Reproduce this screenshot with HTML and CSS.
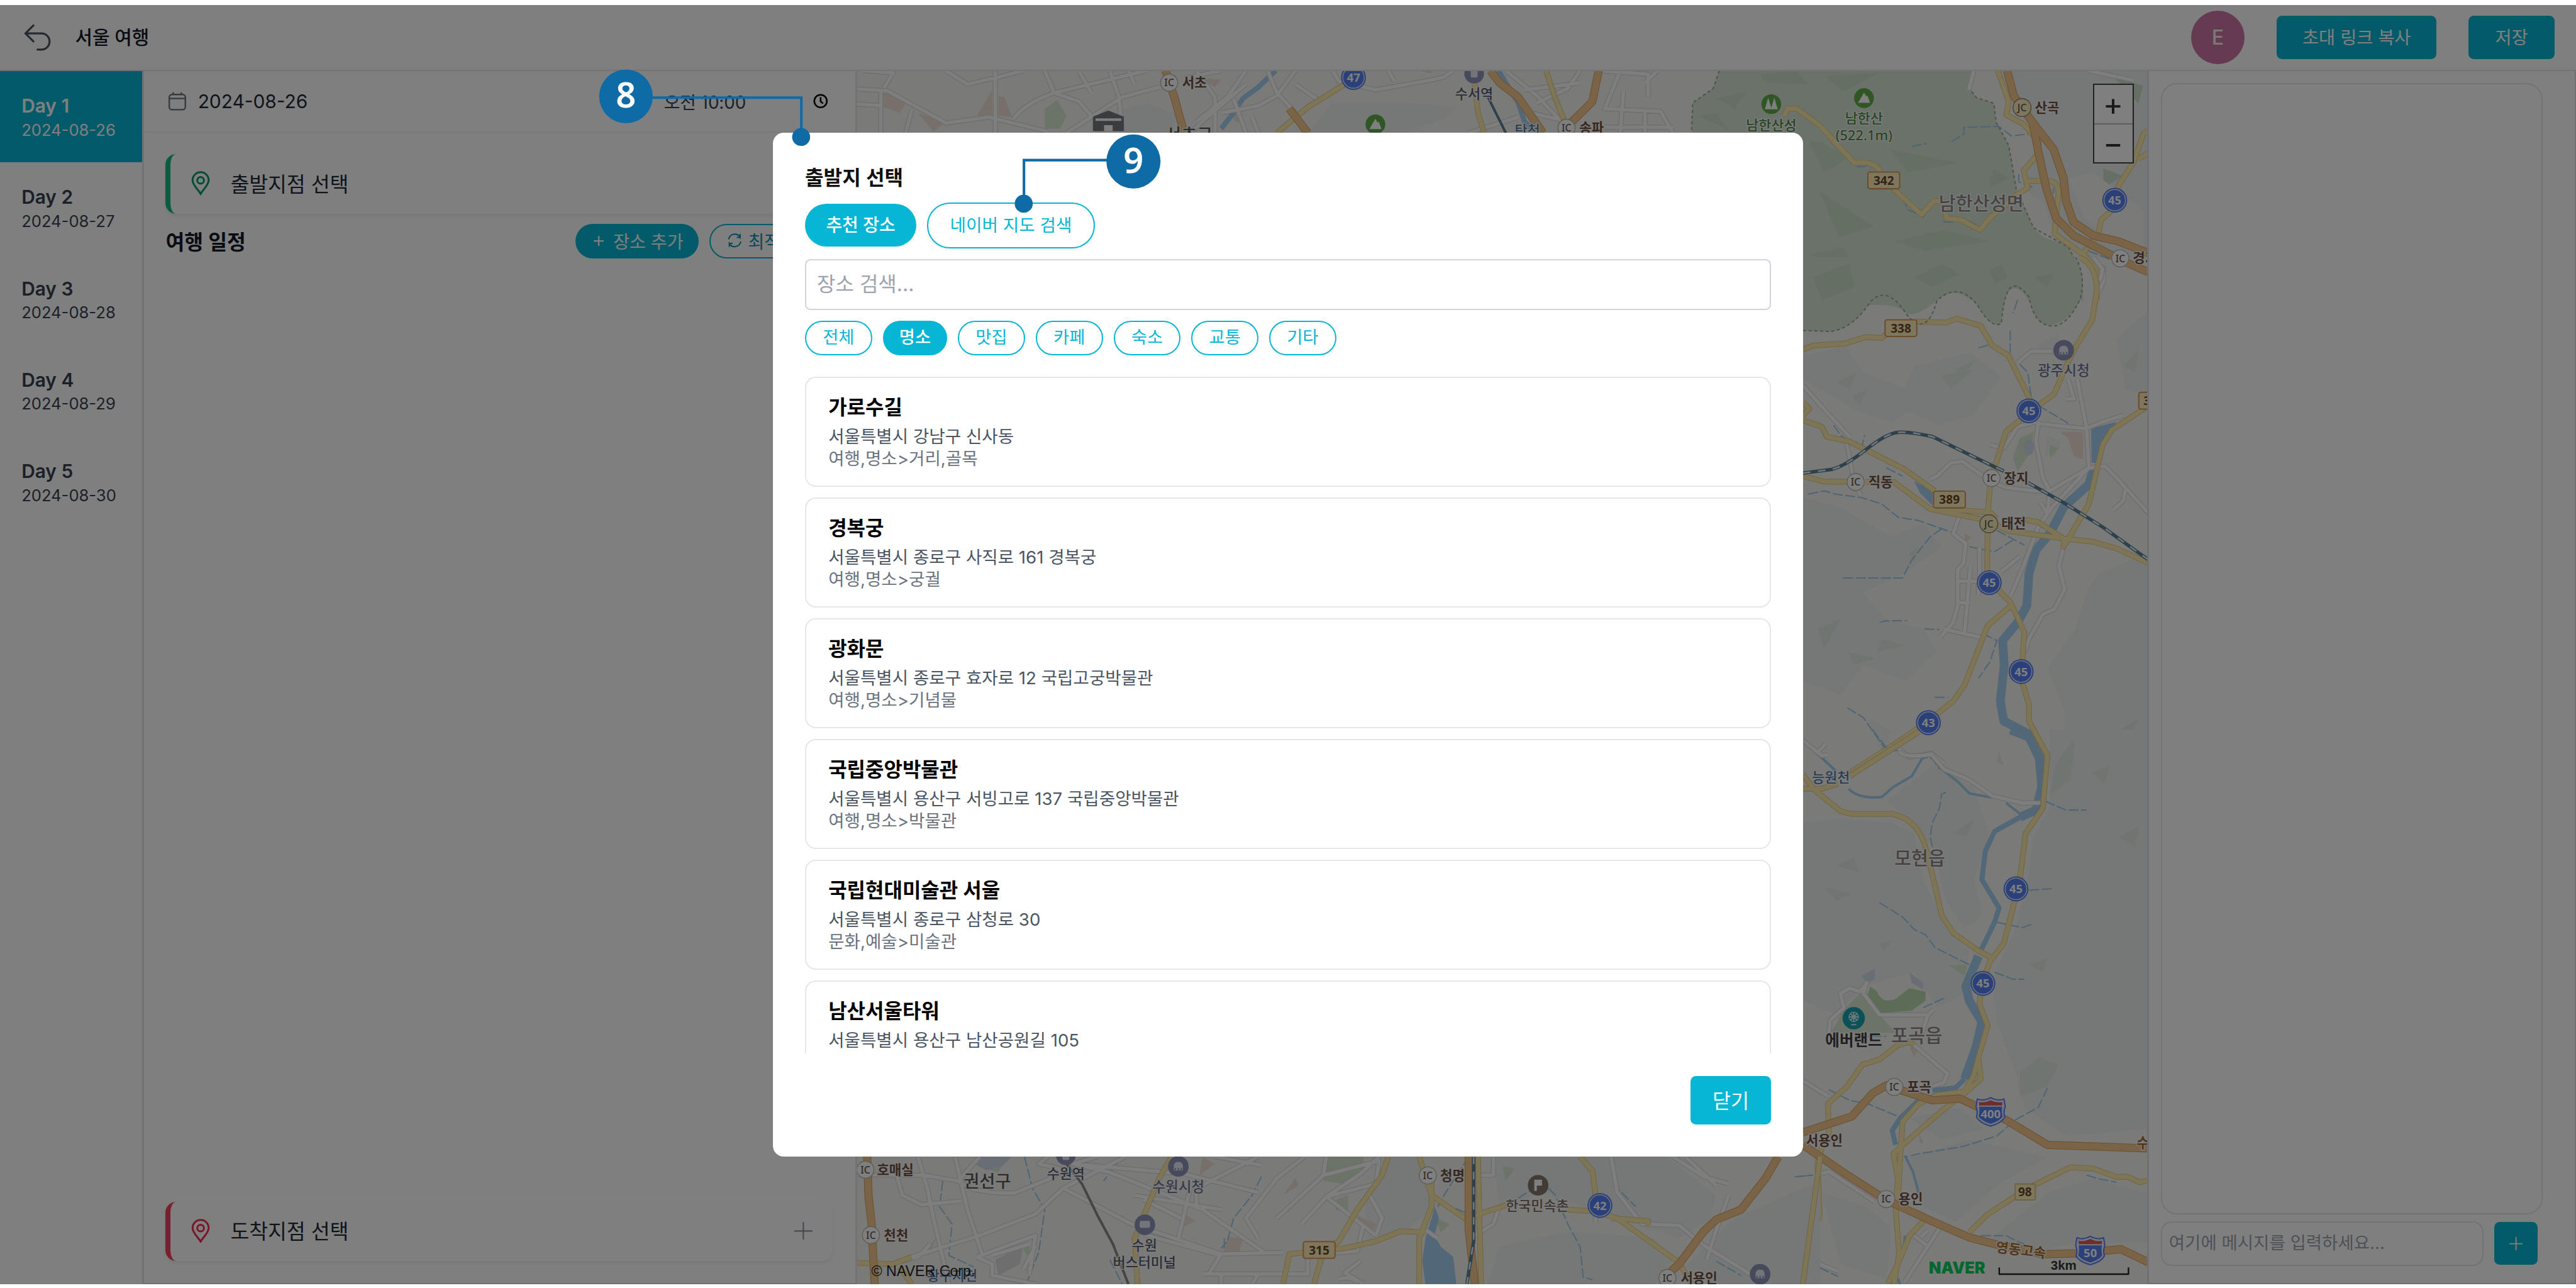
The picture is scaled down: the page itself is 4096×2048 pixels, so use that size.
FILE: index.html
```html
<!DOCTYPE html>
<html lang="ko">
<head>
<meta charset="utf-8">
<title>서울 여행</title>
<link rel="stylesheet" href="styles.css">
</head>
<body>
<div class="app">
  <header class="topbar">
    <svg class="back" viewBox="0 0 24 24"><path d="M9 15 3 9m0 0 6-6M3 9h12a6 6 0 0 1 0 12h-3"/></svg>
    <h1 class="trip-title">서울 여행</h1>
    <div class="avatar">E</div>
    <button class="btn">초대 링크 복사</button>
    <button class="btn btn-save">저장</button>
  </header>
  <main class="columns">
    <nav class="days">
      <div class="day day-active"><b>Day 1</b><span>2024-08-26</span></div>
      <div class="day"><b>Day 2</b><span>2024-08-27</span></div>
      <div class="day"><b>Day 3</b><span>2024-08-28</span></div>
      <div class="day"><b>Day 4</b><span>2024-08-29</span></div>
      <div class="day"><b>Day 5</b><span>2024-08-30</span></div>
    </nav>
    <section class="planner">
      <div class="date-row">
        <svg class="calendar" viewBox="0 0 14 14"><rect x="1" y="2" width="12" height="11.300" rx="2"/><path d="M1 5h12M4 .3v1.700M10 .3v1.700"/></svg>
        <span class="date">2024-08-26</span>
        <span class="time">오전 10:00</span>
        <svg class="clock" viewBox="0 0 12 12"><circle cx="6" cy="6" r="4.7"/><path d="M6 3v3.2l1.8 1.6"/></svg>
      </div>
      <div class="place place-start">
        <svg class="pin" viewBox="0 0 14 18"><path d="M7 17C5 13.500 1 10.500 1 6.800a6 6 0 0 1 12 0C13 10.500 9 13.500 7 17z"/><circle cx="7" cy="6.900" r="2.500"/></svg>
        <span>출발지점 선택</span>
      </div>
      <div class="schedule">
        <h2>여행 일정</h2>
        <button class="pill-add"><svg viewBox="0 0 8 8"><path d="M4 .5v7M.5 4h7"/></svg>장소 추가</button>
        <button class="pill-opt"><svg viewBox="0 0 12 12"><path d="M1.300 5.200A4.800 4.800 0 0 1 10.200 3.600V1M10.200 3.700H7.600M10.700 6.800A4.800 4.800 0 0 1 1.800 8.400V11M1.800 8.300h2.600"/></svg>최적화</button>
      </div>
      <div class="place place-end">
        <svg class="pin" viewBox="0 0 14 18"><path d="M7 17C5 13.500 1 10.500 1 6.800a6 6 0 0 1 12 0C13 10.500 9 13.500 7 17z"/><circle cx="7" cy="6.900" r="2.500"/></svg>
        <span>도착지점 선택</span>
        <svg class="plus" viewBox="0 0 14 14"><path d="M7 0v14M0 7h14"/></svg>
      </div>
    </section>

    <section class="map">
      <svg class="map-canvas" viewBox="1997 166 3004 2824" preserveAspectRatio="none">
        <defs>
          <g id="ic"><circle r="20" class="ic-ring"/><text class="ic-text" y="8.500">IC</text></g>
          <g id="jc"><circle r="21" class="jc-ring"/><text class="ic-text" y="8.500">JC</text></g>
          <g id="nat"><circle r="29" class="nat-out"/><circle r="25" class="nat-in"/></g>
          <g id="shield"><path class="shield-out" d="M-31-30Q-18-24 0-33Q18-24 31-30L34-12Q29 0 33 12Q26 26 0 33Q-26 26-33 12Q-29 0-34-12z"/><path class="shield-in" d="M-27-12H27Q25 0 28 11Q20 22 0 28Q-20 22-28 11Q-25 0-27-12z"/><path class="shield-red" d="M-27-15V-23Q-14-20 0-27Q14-20 27-23V-15z"/></g>
          <g id="hall"><circle r="24" class="poi-blue"/><path class="poi-mark" d="M-12 11V-3Q-10-12 0-12Q10-12 12-3V11zM-7 4v5M0 4v5M7 4v5"/></g>
          <g id="peak"><circle r="23" class="poi-green"/><path class="poi-white" d="M-14 11 0-13 5-4 8-6 14 11z"/></g>

          <path id="a-white" d="M580 1330 620 1400V1470L610 1530 M360 370 350 470 M0 360 60 300 M590 370 680 420"/>
          <path id="a-yellow" d="M0 565Q35 600 80 740L120 850H145Q165 860 170 890L200 990 255 1120 280 1050H298L305 1140 335 1148 372 1200 395 1130 412 1095 445 1020 468 980 460 890 490 800V740L460 650 425 600 430 530 408 370 M468 945H510Q530 950 530 1010L522 1220 580 1330 605 1400 607 1568 M580 1320 610 1220 615 1150 640 1090 650 970 680 850 700 700 710 680 M690 830 710 800"/>
          <path id="a-orange" d="M427 370 440 500 478 640 520 780 540 930 545 1050 560 1160 600 1230 650 1260 710 1320 M478 640 490 800 505 980 525 1140 560 1230 620 1310 665 1370 710 1420"/>
          <path id="b-white" d="M37 390 140 470 240 545 M225 560 240 610 260 690 290 725 M590 675 620 665 680 625 730 620 790 650 850 680 920 700 1040 710 1110 710 1280 640 M1060 500 1050 560 1080 670 1110 710 1100 780 M1280 640 1270 520 1230 370M1190 370 1215 430H1180M970 320 1030 285H1120M1060 505 1180 515 1270 520 1340 500 1430 480M1280 640 1350 635 1400 670 1568 800M1440 700 1430 740 1385 768M1280 640 1120 760 1060 820 1000 930 940 1030M980 910 900 955M1170 880 1150 940 1175 1010 1130 1070 1080 1085 1020 1160 1000 1200M720 780 690 840 745 870 735 930 710 950V1060L690 1110 635 1155M805 880V980M715 985H800V1030M715 1050H760M765 940 750 1060 740 1140M650 1130 740 1145 810 1155M455 1495 500 1520 595 1508 650 1540 M1300 0 1340 35 1330 70M850 570 910 580 970 515 1050 500M1070 745 1100 780"/>
          <path id="b-yellow" d="M37 280 80 268 220 262 310 242 380 245 400 232M530 195 660 198 705 186 810 208 860 268 930 298 1030 440 1060 455M1240 0Q1310 20 1315 100L1295 190 1220 275 1175 340 1130 415 1040 460 920 530 870 640 850 700 840 780 838 950 850 985 940 1050 1000 1140 985 1280 1020 1360V1410L1100 1520 1090 1568M940 1060 840 1120 740 1300 690 1350 600 1400 480 1460 240 1568M37 495 120 515 140 545 240 560 480 645 610 710 M37 665 130 682H230M310 682H430L590 765 840 800 930 832 1170 855 1300 865 1400 885 1540 930M640 765 850 775 880 795 M1000 798 1060 805 1170 855V880L1280 750 1340 570 1380 525 1540 450M37 440 65 460 37 480"/>
          <path id="b-rail" d="M37 656 160 645Q220 635 310 585T450 532 600 545L820 620 910 650 M1015 685 1180 750 1340 820 1540 920"/>
          <path id="c-white" d="M455 60Q480 80 595 68L650 110 760 140 860 185 990 205H1070M37 30 120 72 145 70M105 60 135 40M150 850 155 815 215 780 200 740 240 725 285 735 315 710 300 740 370 800 580 800 605 785M580 800 555 850M520 885 665 965 650 990 600 1000M37 985 150 1030M120 1245 150 1240 350 1325M37 1420 55 1460 110 1500 190 1520M630 1400 480 1550M520 1420 580 1450M550 1425 580 1405"/>
          <path id="c-yellow" d="M1040 0 1100 70 1080 220 1005 290 980 420 950 500 910 600 850 650 810 720 805 770 840 830 800 920 810 980 740 1020 640 1070 480 1160 430 1190 450 1260 440 1340 455 1470 430 1568M800 920 780 970 740 1015 620 1025 540 1050 470 1100 460 1200 450 1320M37 125 90 170 200 228 250 236H430Q540 255 570 330T640 520L690 570 800 620 860 640M240 130 540 5M37 165 120 165 190 150M520 885 500 875 450 885 370 925 295 940 230 1000 145 1050 150 1130 115 1180 100 1220 110 1360 70 1440 60 1490 10 1555M560 1380 500 1420 450 1500 405 1555M760 1410 840 1360 1020 1285 1200 1228 1300 1232 1400 1255 1450 1255 1500 1270 1540 1265"/>
          <path id="c-orange" d="M37 1130 250 1085 340 1020 400 998 480 1015 600 1040 720 1035 820 1065 920 1095 1100 1165 1540 1175M37 1165 230 1250 400 1320 600 1380 760 1425 880 1445 1080 1472 1220 1470 1420 1458 1540 1495"/>
          <path id="d-white" d="M110 130 125 350 135 560 160 1020M170 130 190 500 215 830 M210 130 175 300M0 255 120 260 175 300 200 360 230 380 265 385 320 290 345 220 305 180 320 130M400 130 360 180 385 190 540 250 660 380M180 440 115 465 85 400 75 250M445 130 345 350M345 350 300 530 210 680 100 830M345 350 455 600 600 810 700 800M360 180 420 240 570 500 670 800M460 400 600 500M475 430 535 560M590 130 665 190M660 130 560 350 560 480M735 130 690 280 640 560 660 700M770 130 765 260 690 560M855 130 825 250 770 410 730 600 M765 260 855 160 850 320 770 410 850 680M830 600 820 790 730 820M840 400 860 560 850 680M205 830 300 680 290 950M205 830 230 880 230 960 300 1020M290 740 230 820M570 950H740V810M600 960V1020M660 950 650 1020M825 860 800 940 830 1020M790 985Q810 960 820 1010M130 740 110 830 60 890M300 750 280 920M1010 260H1040V130M1330 130 1380 270 1420 320M1350 130 1400 330M1230 130 1240 380 1280 600 1340 610 1380 750 1470 990M1420 400 1400 640 1385 850M1050 470 1040 600 1010 680M930 640 950 700M480 680 600 820M600 810 580 950M1205 500V590M550 350 530 720"/>
          <path id="d-yellow" d="M520 130 500 280 475 540 460 700 465 1020M870 130 860 260 820 500 790 720 765 800 755 940 750 1020M920 130 940 400 1000 580M940 300 940 480 920 700 920 1020M700 1020 710 810 800 770 850 720 890 650 930 660M1015 130 1020 1020M1010 540 1060 470M1160 500 1200 510 1240 560 1340 870M1180 130 1200 230 1205 400M1230 560 1290 580V610M1568 130 1550 700 1540 1020M0 870 70 880 100 830M80 900 100 1020M1340 870 1360 1020"/>
          <path id="d-orange" d="M28 130 30 400 35 600 40 1020M1500 130 1480 280 1440 500 1400 570 1380 650 1340 880 1325 940M1000 130V640L1010 1020"/>
          <path id="e-white" d="M22 105 70 120 55 225 M0 230 60 245 155 470 225 430 320 530M50 250V540M100 380 90 540M155 105 190 200 240 150 280 105M235 105V540M315 105 330 260 370 320 390 420M330 260 480 105M330 260Q280 340 265 440M370 105 390 260M420 105 435 290 440 540M450 105 460 200M350 540 440 290 500 220M600 105 540 160M560 105 590 290 590 540M640 105 610 290 560 460 M675 105 690 260 720 400M720 105 690 280 660 350 600 400M720 200 760 320M640 200 580 420 550 540M620 300 640 540M870 105 880 180M780 105 790 180 850 240 940 170 960 150 975 105M1060 105 1110 280 1150 460M1180 105 1160 230 1110 330M1090 240 1180 190M1090 390 1160 460M1210 105 1290 130 1290 290M1245 105 1220 370 1310 390 1330 540M1250 250 1245 540M1305 105 1285 190M1285 380V540M1000 540 1080 430M1220 500H1330M660 540 650 430M0 335 50 350"/>
          <path id="e-yellow" d="M800 200 740 360 690 540M1010 200 1015 400 1025 540M1125 105 1140 300 1155 460M1568 490 1530 370H1515L1510 420"/>
          <path id="e-orange" d="M510 105 525 300 540 540M710 370 740 540M1035 105 1050 190 1080 290 1120 540M1210 105 1200 320 1165 470"/>
        </defs>
        <rect class="land" x="1997" y="166" width="3004" height="2824"/>

        <g class="tile" transform="translate(4180 0) scale(1.160700 .446400)">
          <path class="hill" d="M0 370H710V1344H0z"/>
          <path class="forest" d="M0 370H362L350 460 365 510 400 540 405 640 430 760 445 990 480 1190 550 1290 575 1420 580 1568H0z"/>
          <path class="forest-dark" d="M60 400 170 380 100 480zM20 700 110 820 60 900zM190 780 330 850 230 900zM200 1260 300 1200 390 1260 260 1310zM50 1000 160 1180 90 1240zM300 1400 420 1350 500 1440 370 1500zM30 1330 100 1290 120 1420zM620 880 660 920 620 980zM640 400 700 450 690 540zM400 880 430 930 390 980z"/>
          <path class="land" d="M362 370H410L440 520 470 650 480 780 460 980 500 1060 520 1220 560 1290 500 1240 480 1190 450 1000 430 760 405 640 400 540 365 510 350 460zM550 930 580 1130 620 1230 700 1290V1100L600 900zM285 1568Q320 1490 355 1568zM420 1568Q440 1440 470 1568z"/>
          <path class="trail" d="M362 370 350 460 365 510 400 540 405 640 430 760 445 990 480 1190 550 1290 575 1420"/>
          <path class="stream" d="M235 765 265 750M315 740 340 700V665L410 660 435 710 470 700M125 870H140L160 850M220 1030 225 1090 260 1135M298 1160H320L340 1140 372 1185M450 910V950L480 980M520 980V1010M590 1310 670 1390M75 740 90 780"/>
          <use href="#a-white" class="white-case"/><use href="#a-white" class="white-road"/>
          <use href="#a-yellow" class="yellow-case"/><use href="#a-yellow" class="yellow-road"/>
          <use href="#a-orange" class="orange-case"/><use href="#a-orange" class="orange-road"/>
        </g>

        <g class="tile" transform="translate(4180 600) scale(.535700 .765300)">
          <path class="forest" d="M37 0H1225Q1270 70 1240 130T1110 208Q1040 200 1020 120T940 92Q910 110 900 200 860 220 800 150 720 70 620 130T480 165 320 145Q250 215 160 225L37 222z"/>
          <path class="forest-dark" d="M80 60 240 20 260 90 120 130zM520 60 640 20 720 50 600 90zM850 40 900 20 930 60 870 80zM1040 60 1130 50 1100 90z"/>
          <path class="hill" d="M37 300 220 270 300 350 480 400 520 330 760 290 900 360 840 420 780 480 620 510 500 470 420 500 280 470 160 420 37 370zM37 730 200 760 420 850 560 810 640 880 480 960 300 1020 400 1100 560 1130 620 1200 480 1290 300 1240 200 1330 37 1290zM1100 540 1160 560 1130 610 1090 600zM1330 960 1540 900V1568H1150L1180 1390 1100 1250 1220 1130 1280 1000zM1050 270 1150 230 1130 300zM1400 250 1540 160V420L1440 400zM320 1400 420 1440 380 1510z"/>
          <path class="hill-dark" d="M180 380 270 350 240 400zM640 360 780 340 680 400zM250 420 320 400 280 450zM700 340 790 310 720 370zM100 1130 200 1100 130 1190zM230 1200 350 1220 260 1240zM380 1160 480 1180 360 1200zM500 900 540 880 520 930zM1410 1440 1500 1400 1460 1460zM1430 330 1500 280 1480 350z"/>
          <path class="park" d="M950 610 980 550 1040 530 1030 590 970 650zM1110 570 1150 580 1110 610z"/>
          <path class="urban" d="M1155 530 1255 530V615L1215 605 1190 550zM740 840 770 850 740 870z"/>
          <circle class="pond" cx="1018" cy="577" r="24"/>
          <path class="water" d="M1290 520 1400 500 1350 560 1315 625H1292zM520 680 600 710V755L545 715z"/>
          <path class="river" d="M1300 645 1280 690 1170 760 1110 840 1050 890 1020 960 1010 1060 970 1110 905 1165 912 1240 895 1350 910 1410 1020 1450 1065 1510 1075 1568"/>
          <path class="stream" d="M970 130 950 170M938 222V290M800 275 850 265M980 325 1015 350 1030 430M1060 450 1180 500 1200 510M1440 500 1540 460M60 720 130 710 180 720 290 730 380 750 450 790 540 800 680 835M640 825 590 850 510 920 470 975H210M760 880 870 895 950 860M880 830 1000 875M370 1110 400 1105 490 1105M565 1130 630 1132M820 1145 880 1165 850 1230 800 1280M610 1338H670M230 1370 300 1400 400 1500H450M37 1475 110 1510 180 1568M520 1568 560 1520 600 1525 640 1568M170 510 200 540 290 585 305 540M400 640 470 665"/>
          <use href="#b-white" class="white-case"/><use href="#b-white" class="white-road"/>
          <use href="#b-yellow" class="yellow-case"/><use href="#b-yellow" class="yellow-road"/>
          <use href="#b-rail" class="rail"/><use href="#b-rail" class="rail-dash"/>
          <path class="trail" d="M37 222 160 225Q250 215 320 145T480 165 620 130Q720 70 800 150 860 220 900 200 910 110 940 92T1020 120Q1040 200 1110 208T1240 130Q1270 70 1225 0"/>
        </g>

        <g class="tile" transform="translate(4180 1700) scale(.535700 .829100)">
          <path class="hill" d="M600 100 780 160 850 300 780 420 820 520 740 560 660 480 600 330 480 240 400 200zM37 260 200 250 420 260 520 290 560 420 660 560 760 620 740 740 620 780 520 680 300 720 180 800 37 760zM1110 0H1540V1120L1180 1140 1000 1060 960 960 880 820 860 700 960 560 1020 400 1040 300 1110 220zM500 1090 720 1060 820 1120 640 1150zM500 1200 760 1150 1100 1200 900 1270 700 1380 560 1340zM120 1300 320 1340 420 1400 400 1540 200 1500zM830 1440 1100 1300 1300 1260 1540 1300V1440L1220 1440 1080 1460z"/>
          <path class="hill-dark" d="M1140 90 1220 20 1200 140 1110 180zM1290 120 1370 100 1350 150zM690 290 780 250 750 300zM180 380 260 360 280 400zM130 440 250 460 180 480zM1020 660 1100 640 1080 680zM980 960 1060 920 1150 940 1100 1000 980 1030zM370 600 430 590 390 620zM1410 300 1500 270 1480 330zM890 60 910 100 880 90z"/>
          <path class="park" d="M210 790 300 730 370 800 440 850 160 850zM670 660 750 660 740 690z"/>
          <path class="golf" d="M330 720 360 735Q380 770 440 755L500 725 570 735V760L510 788 370 795 315 750z"/>
          <path class="pond" d="M290 690 350 670V700L320 710zM500 680 560 710V730L510 710z"/>
          <path class="urban" d="M500 890 540 895 520 920zM540 1130 560 1160 545 1160z"/>
          <path class="river" d="M940 0 1020 20 1065 80 1075 160 1050 225 980 245"/>
          <path class="river-thin" d="M1050 225 980 245 870 285 830 340 815 420 890 500 870 540 810 620"/>
          <path class="river" d="M800 635 745 720 760 760 815 820 790 890 740 980"/>
          <path class="river-thin" d="M740 980 700 1005 600 1012M540 1040 460 1090 425 1125 440 1165"/>
          <path class="stream-wide" d="M235 165Q280 195 380 188L430 160 510 130 555 80 590 72 640 110 710 145 760 178 860 190M920 205 980 235M480 1195 515 1240 540 1300M37 30 180 115M480 1420 475 1470M450 1540 465 1568"/>
          <path class="stream" d="M340 0 400 50H450M660 175 640 180 630 220 600 260 590 300 600 330M1090 200 1180 225H1270M1020 450 1130 445M880 540 990 555 1035 545M370 485 470 525 520 560 570 575 610 610 700 640 780 665M870 680 950 700H1000M560 780 660 750M150 1010 240 1040 320 1050 450 1085M1100 1005 1060 1060 960 1095 880 1140 730 1170 540 1190 480 1200M810 1420 920 1420 1050 1460M110 1510 190 1535M1270 1250 1320 1260 1400 1270M0 1255 80 1250M280 860H400"/>
          <use href="#c-white" class="white-case"/><use href="#c-white" class="white-road"/>
          <use href="#c-yellow" class="yellow-case"/><use href="#c-yellow" class="yellow-road"/>
          <use href="#c-orange" class="orange-case"/><use href="#c-orange" class="orange-road"/>
        </g>

        <g class="tile" transform="translate(1980 2650) scale(1.441300 .333333)">
          <path class="hill" d="M1040 130H1320L1400 400 1390 560 1340 700 1240 560 1120 380 1050 480zM1430 560 1568 300V1020H1390L1350 900zM1160 650 1300 700 1330 850 1300 1020H1030L1050 760zM870 130H920L940 500 900 640 840 760 830 400z"/>
          <path class="park" d="M765 130H830V260L800 320 765 300zM785 430 805 400V520L785 500zM1055 200 1075 210 1060 300zM945 560 970 600 955 660zM225 220 245 200 240 240zM290 740V840L280 780z"/>
          <path class="urban" d="M570 130 590 180 565 260zM720 280 725 330 700 400zM540 530 558 580 540 620zM610 690 635 700 630 790 605 800zM820 540 850 600 845 670 820 600zM130 740 140 700 125 840z"/>
          <path class="campus" d="M235 850 280 750 275 880 240 960z"/>
          <path class="pond" d="M205 130H262L245 200 220 225 205 190z"/>
          <path class="water" d="M945 480 952 560 945 680 955 760 975 830 980 1020H930L925 860 930 700 940 560z"/>
          <path class="stream" d="M282 130 295 350 315 500 305 800 285 1020M440 130 410 300M150 300 145 480 165 600 160 820 200 900M665 270 650 400 620 560 610 720 600 770M420 850 440 1020M605 700V790M1000 130 960 400 950 480M1080 420 1120 310 1140 400 1160 600 1180 760 1185 970 1200 990M1235 220 1240 350 1270 480M1530 270 1555 260M1400 860 1440 960M960 460 1000 530"/>
          <use href="#d-white" class="white-case"/><use href="#d-white" class="white-road"/>
          <use href="#d-yellow" class="yellow-case"/><use href="#d-yellow" class="yellow-road"/>
          <use href="#d-orange" class="orange-case"/><use href="#d-orange" class="orange-road"/>
          <path class="train" d="M350 180 375 320 400 540 425 740 450 1020"/>
          <path class="rail" d="M1008 130 1008 720 997 1020"/><path class="rail-dash" d="M1008 130 1008 720 997 1020"/>
        </g>

        <g class="tile" transform="translate(1980 130) scale(1.441300 .333333)">
          <path class="hill" d="M440 380 480 330 530 420 520 540H440zM780 330 900 330 980 360 960 440 900 540H740z"/>
          <path class="forest" d="M1405 105H1568V600H1360L1362 330 1395 230z"/>
          <path class="forest-dark" d="M1470 130 1530 110 1550 200 1480 190zM1400 300 1450 250 1430 370zM1370 420 1400 400 1420 520z"/>
          <path class="urban" d="M230 240V420H205zM240 280 250 290 262 430 240 420zM50 255 70 280 90 340 80 400 55 360zM110 400 135 440 150 480 135 530zM560 150 600 170 590 220zM620 380 640 490 620 450zM320 190 330 250"/>
          <path class="park" d="M315 370 335 310 350 420 340 510H315zM920 105H940V125z"/>
          <path class="river-thin" d="M688 105 660 220 635 300 620 400 600 510M1048 105 1080 330 1090 460 1110 540"/>
          <use href="#e-white" class="white-case"/><use href="#e-white" class="white-road"/>
          <use href="#e-yellow" class="yellow-case"/><use href="#e-yellow" class="yellow-road"/>
          <use href="#e-orange" class="orange-case"/><use href="#e-orange" class="orange-road"/>
          <path class="train-blue" d="M1030 280 1060 540"/>
          <path class="trail" d="M1405 105 1395 230 1362 330 1360 540"/>
        </g>

        <g class="junctions">
          <use href="#ic" x="2723.700" y="193"/><text x="2754" y="204">서초</text>
          <use href="#ic" x="3649" y="298"/><text x="3679" y="309">송파</text>
          <use href="#jc" x="4710" y="251"/><text x="4740" y="262">산곡</text>
          <use href="#ic" x="4939" y="602"/><text x="4968" y="613">경기광주</text>
          <use href="#ic" x="4322.500" y="1122.700"/><text x="4352" y="1134">직동</text>
          <use href="#ic" x="4639" y="1113.500"/><text x="4668" y="1125">장지</text>
          <use href="#jc" x="4632.700" y="1220"/><text x="4662" y="1231">태전</text>
          <use href="#ic" x="4412.500" y="2531"/><text x="4442" y="2542">포곡</text>
          <text x="4207" y="2667">서용인</text>
          <use href="#ic" x="4393.700" y="2792"/><text x="4422" y="2803">용인</text>
          <use href="#ic" x="2016" y="2723.700"/><text x="2043" y="2735">호매실</text>
          <use href="#ic" x="2029" y="2876"/><text x="2059" y="2888">천천</text>
          <use href="#ic" x="3326" y="2737"/><text x="3355" y="2749">청명</text>
          <use href="#ic" x="3884" y="2976"/><text x="3915" y="2987">서용인</text>
          <text class="highway" x="4977" y="2673">수도권</text>
          <text class="highway" transform="translate(4648 2915) rotate(7)">영동고속</text>
        </g>

        <g class="national">
          <use href="#nat" x="3153" y="181"/><text x="3153" y="191">47</text>
          <use href="#nat" x="4926" y="466.500"/><text x="4926" y="476">45</text>
          <use href="#nat" x="4726" y="957"/><text x="4726" y="967">45</text>
          <use href="#nat" x="4633.700" y="1357"/><text x="4633.700" y="1367">45</text>
          <use href="#nat" x="4708" y="1564"/><text x="4708" y="1574">45</text>
          <use href="#nat" x="4492" y="1683"/><text x="4492" y="1693">43</text>
          <use href="#nat" x="4696" y="2070"/><text x="4696" y="2080">45</text>
          <use href="#nat" x="4619" y="2290"/><text x="4619" y="2300">45</text>
          <use href="#nat" x="3727" y="2807"/><text x="3727" y="2817">42</text>
          <use href="#shield" x="4637" y="2589"/><text x="4637" y="2604">400</text>
          <use href="#shield" x="4869" y="2912"/><text x="4869" y="2927">50</text>
        </g>

        <g class="local">
          <rect x="4351" y="401" width="74" height="39" rx="5"/><text x="4388" y="431">342</text>
          <rect x="4391" y="745" width="74" height="39" rx="5"/><text x="4428" y="775">338</text>
          <rect x="4504" y="1144" width="74" height="39" rx="5"/><text x="4541" y="1174">389</text>
          <rect x="4982" y="914" width="74" height="39" rx="5"/><text x="5017" y="944">338</text>
          <rect x="3036" y="2891" width="74" height="39" rx="5"/><text x="3073" y="2921">315</text>
          <rect class="pale" x="4694" y="2757" width="47" height="37" rx="2"/><text x="4717" y="2786">98</text>
        </g>

        <g class="pois">
          <use href="#peak" x="4342" y="229"/><use href="#peak" x="3204" y="290"/>
          <circle class="poi-green" cx="4126" cy="243" r="23"/><path class="poi-white" d="M4111 255 4119 228 4127 255zM4125 255 4133 228 4141 255z"/>
          <text class="green" x="4342" y="287">남한산</text>
          <text class="green" x="4342" y="327">(522.1m)</text>
          <text class="green" x="4126" y="304">남한산성</text>
          <use href="#hall" x="4807" y="816"/><text class="slate" x="4807" y="874">광주시청</text>
          <use href="#hall" x="2745" y="2716"/><text class="slate" x="2745" y="2775">수원시청</text>
          <circle class="poi-blue" cx="3434" cy="172" r="23"/><rect class="poi-mark" x="3425" y="160" width="18" height="22" rx="4"/><text class="slate dark" x="3434" y="231">수서역</text>
          <circle class="poi-blue" cx="2483" cy="2690" r="23"/><rect class="poi-mark" x="2474" y="2680" width="18" height="22" rx="4"/><text class="slate dark" x="2483" y="2745">수원역</text>
          <circle class="poi-blue" cx="2667" cy="2852" r="24"/><rect class="poi-mark" x="2654" y="2842" width="26" height="18" rx="4"/><text class="slate dark" x="2666" y="2912">수원</text><text class="slate dark" x="2666" y="2951">버스터미널</text>
          <use href="#hall" x="4100" y="2967"/>
          <circle class="poi-brown" cx="3583" cy="2760" r="24"/><path class="poi-white" d="M3574 2747h18v14h-12v12h-6z"/><text class="brown" x="3581" y="2819">한국민속촌</text>
          <circle class="poi-teal" cx="4318" cy="2371" r="26"/><circle class="wheel" cx="4318" cy="2368" r="11"/><path class="wheel" d="M4307 2368h22M4318 2357v22M4310 2360l16 16M4326 2360l-16 16M4312 2386h12"/><text class="strong" x="4318" y="2436">에버랜드</text>
          <path class="office" d="M2546 306V272L2582 258 2618 272V306z"/><path class="poi-white" d="M2552 276h60v6h-60zM2572 292h20v14h-20z"/>
          <text class="town" x="4615" y="490">남한산성면</text>
          <text class="town" x="4472" y="2014">모현읍</text>
          <text class="town" x="4465" y="2427">포곡읍</text>
          <text class="gu" x="2300" y="2765">권선구</text>
          <text class="gu" x="2770" y="328">서초구</text>
          <text class="blue" x="4265" y="1822">능원천</text>
          <text class="blue" x="3558" y="316">탄천</text>
          <text class="blue" x="2218" y="2982">황구지천</text>
        </g>
        <text class="copyright" x="2030" y="2972">© NAVER Corp.</text>
        <text class="naver" x="4493" y="2965">NAVER</text>
        <text class="scale-text" x="4807" y="2956">3km</text>
        <path class="scale-bar" d="M4657 2951V2967H4958V2951"/>
      </svg>
      <div class="zoom"><span>+</span><span>−</span></div>
    </section>

    <aside class="chat">
      <div class="messages"></div>
      <div class="compose">
        <div class="message-input">여기에 메시지를 입력하세요...</div>
        <button class="send"><svg viewBox="0 0 10 10"><path d="M5 0v10M0 5h10"/></svg></button>
      </div>
    </aside>
  </main>

  <div class="overlay">
    <div class="modal">
      <h3>출발지 선택</h3>
      <div class="tabs"><button class="tab tab-on">추천 장소</button><button class="tab">네이버 지도 검색</button></div>
      <div class="search">장소 검색...</div>
      <div class="chips">
        <button class="chip">전체</button><button class="chip chip-on">명소</button><button class="chip">맛집</button><button class="chip">카페</button><button class="chip">숙소</button><button class="chip">교통</button><button class="chip">기타</button>
      </div>
      <div class="list">
        <article class="card"><h4>가로수길</h4><p>서울특별시 강남구 신사동</p><p class="kind">여행,명소&gt;거리,골목</p></article>
        <article class="card"><h4>경복궁</h4><p>서울특별시 종로구 사직로 161 경복궁</p><p class="kind">여행,명소&gt;궁궐</p></article>
        <article class="card"><h4>광화문</h4><p>서울특별시 종로구 효자로 12 국립고궁박물관</p><p class="kind">여행,명소&gt;기념물</p></article>
        <article class="card"><h4>국립중앙박물관</h4><p>서울특별시 용산구 서빙고로 137 국립중앙박물관</p><p class="kind">여행,명소&gt;박물관</p></article>
        <article class="card"><h4>국립현대미술관 서울</h4><p>서울특별시 종로구 삼청로 30</p><p class="kind">문화,예술&gt;미술관</p></article>
        <article class="card"><h4>남산서울타워</h4><p>서울특별시 용산구 남산공원길 105</p><p class="kind">여행,명소&gt;전망대</p></article>
      </div>
      <button class="close">닫기</button>
    </div>
  </div>
</div>

<svg class="callouts" viewBox="0 0 6000 3000">
  <path d="M1500 227.500H1866.500V310M2600 373H2385V470"/>
  <circle cx="1866" cy="319" r="21"/><circle cx="2384.500" cy="474.500" r="21"/>
  <circle cx="1458" cy="224.500" r="62.500"/><circle cx="2640" cy="376" r="63"/>
  <text x="1458" y="251">8</text><text x="2640" y="403">9</text>
</svg>
</body>
</html>
```
FILE: styles.css
```css
/* 1rem = 10 design pixels of a 1920-wide layout */
html { font-size: calc(100vw / 192); }
* { box-sizing: border-box; margin: 0; padding: 0; }
body {
  position: relative;
  width: 192rem;
  height: 96rem;
  padding: .39rem 0 .3rem;
  overflow: hidden;
  background: #fff;
  font-family: Inter, "Noto Sans CJK KR", sans-serif;
  color: #1f2937;
}
button { border: 0; font-family: inherit; white-space: nowrap; }
svg { display: block; fill: none; stroke: currentColor; flex: none; }
h1, h2, h3, h4 { font-weight: 600; }

.app { position: relative; display: flex; flex-direction: column; height: 100%; }

.topbar {
  display: flex;
  align-items: center;
  height: 4.9rem;
  padding: 0 1.6rem;
  border-bottom: .14rem solid #e3e6ea;
}
.back { width: 2.4rem; height: 2.4rem; color: #4b5563; stroke-width: 1.5; stroke-linecap: round; stroke-linejoin: round; }
.trip-title { margin-left: 1.6rem; font-size: 1.4rem; font-weight: 500; line-height: 2rem; color: #111827; }
.avatar {
  display: flex; align-items: center; justify-content: center;
  width: 4rem; height: 4rem; margin-left: auto;
  border-radius: 50%; background: #cc76a4; color: #f3f3f3;
  font-size: 1.5rem; font-weight: 500;
}
.btn {
  height: 3.2rem; width: 11.9rem; margin-left: 2.4rem; padding-bottom: .15rem;
  border-radius: .4rem; background: #06b6d4; color: #fff;
  font-size: 1.33rem;
}
.btn-save { width: 6.4rem; }

.columns { display: grid; grid-template-columns: 10.75rem 53.15rem 96.13rem 1fr; flex: 1; min-height: 0; }

.days { border-right: .15rem solid #e5e7eb; }
.day { display: flex; flex-direction: column; padding: 1.6rem; height: 6.81rem; color: #374151; white-space: nowrap; }
.day b { font-size: 1.4rem; font-weight: 600; line-height: 2rem; }
.day span { font-size: 1.2rem; line-height: 1.6rem; }
.day-active { background: #06b6d4; color: #fff; }

.planner { display: flex; flex-direction: column; border-right: .15rem solid #e5e7eb; border-bottom: .1rem solid #e5e7eb; }
.date-row { display: flex; align-items: center; height: 4.6rem; padding: 0 2rem 0 1.75rem; border-bottom: .1rem solid #f3f4f6; font-size: 1.4rem; color: #1f2937; }
.calendar { width: 1.4rem; height: 1.4rem; color: #6b7280; stroke-width: 1.1; }
.date { margin-left: .85rem; }
.time { margin-left: auto; font-size: 1.3rem; color: #374151; }
.clock { width: 1.2rem; height: 1.2rem; margin-left: 4.95rem; color: #000; stroke-width: 1.2; }
.place {
  display: flex; align-items: center; height: 4.45rem;
  margin: 1.6rem 1.7rem 0 1.6rem; padding: 0 1.5rem .1rem;
  border-left: .4rem solid #10b981; border-radius: .8rem;
  box-shadow: 0 .1rem .3rem rgba(0, 0, 0, .08);
  font-size: 1.52rem; color: #1f2937;
}
.pin { width: 1.5rem; height: 1.8rem; color: #059669; stroke-width: 1.4; }
.place span { margin-left: 1.45rem; padding-bottom: .1rem; }
.plus { width: 1.35rem; height: 1.35rem; margin-left: auto; color: #8a939e; stroke-width: 1; }
.place-end { margin-top: auto; margin-bottom: 1.6rem; border-left-color: #f43f5e; }
.place-end .pin { color: #f02a50; }
.schedule { display: flex; align-items: center; height: 2.65rem; margin: .72rem 0 0 1.6rem; overflow: hidden; }
.schedule h2 { flex: 1; padding-bottom: .12rem; font-size: 1.52rem; color: #111827; }
.pill-add, .pill-opt { display: flex; align-items: center; height: 2.6rem; padding-bottom: .1rem; border-radius: 1.3rem; font-size: 1.32rem; }
.pill-add { width: 9.15rem; padding-left: 1.3rem; background: #06b6d4; color: #fff; }
.pill-add svg { width: .85rem; height: .85rem; margin-right: .65rem; }
.pill-opt { width: 10rem; margin: 0 .9rem 0 .8rem; padding-left: 1.25rem; border: .1rem solid #06b6d4; background: #fff; color: #0891b2; }
.pill-opt svg { width: 1.15rem; height: 1.15rem; margin-right: .4rem; }

/* map */
.map { position: relative; overflow: hidden; }
.map-canvas { width: 100%; height: 100%; stroke: none; }
.map-canvas path { vector-effect: non-scaling-stroke; stroke-linejoin: round; }
.land { fill: #f5f5f3; }
.hill { fill: #ebf0ec; }
.hill-dark { fill: #e2eae3; }
.forest { fill: #d6e5d5; }
.forest-dark { fill: #cadfc6; }
.park { fill: #d9e6cf; }
.golf { fill: #b8d8ad; }
.urban { fill: #efe0d4; }
.campus { fill: #dcdcdc; }
.pond { fill: #d3dbe9; }
.water { fill: #a4cfee; }
.river, .river-thin, .stream, .stream-wide { stroke: #a4cfee; }
.river { stroke-width: 14; }
.river-thin { stroke-width: 8; }
.stream-wide { stroke-width: 4; }
.stream { stroke-width: 2; stroke-dasharray: 16 4; stroke: #9dc9e8; }
.trail { stroke: #94ab91; stroke-width: 2; stroke-dasharray: 5 4; }
.white-case { stroke: #d9d9d8; stroke-width: 8; }
.white-road { stroke: #fcfcfc; stroke-width: 5.5; }
.yellow-case { stroke: #dfc987; stroke-width: 9; }
.yellow-road { stroke: #faeaaa; stroke-width: 7; }
.orange-case { stroke: #dba767; stroke-width: 13; }
.orange-road { stroke: #f5c88e; stroke-width: 10.500; }
.rail { stroke: #5c8098; stroke-width: 5.500; }
.rail-dash { stroke: #eaf1f5; stroke-width: 2.5; stroke-dasharray: 12 12; }
.train { stroke: #8a8a8a; stroke-width: 4; }
.train-blue { stroke: #5c8098; stroke-width: 4; }
.map-canvas text { font-family: "Noto Sans", "Noto Sans CJK KR", sans-serif; paint-order: stroke; stroke: #fbfbfb; stroke-width: 4; stroke-linejoin: round; }
.ic-ring { fill: #fff; stroke: #bdb8b0; stroke-width: 2; }
.jc-ring { fill: #faedbd; stroke: #8c806a; stroke-width: 2; }
.map-canvas .ic-text { font-size: 23px; font-weight: 500; fill: #63574f; text-anchor: middle; stroke: none; }
.junctions text { font-size: 31px; font-weight: 700; fill: #6d5042; }
.junctions .highway { fill: #a96f2d; font-size: 32px; }
.nat-out { fill: #5681f0; }
.nat-in { fill: #5681f0; stroke: #dfe8ff; stroke-width: 2.2; }
.shield-out { fill: #e7eeff; stroke: #5681f0; stroke-width: 2; }
.shield-in { fill: #5681f0; }
.shield-red { fill: #dc5a50; }
.national .ic-text, .national text { font-size: 27px; font-weight: 700; fill: #fff; text-anchor: middle; stroke: none; }
.local rect { fill: #fcefbd; stroke: #d99b57; stroke-width: 3; }
.local .pale { stroke: #d8c98e; }
.local text { font-size: 28px; font-weight: 700; fill: #6a4727; text-anchor: middle; stroke: none; }
.pois text { font-size: 33px; font-weight: 500; text-anchor: middle; }
.poi-green { fill: #62ad4a; }
.poi-blue { fill: #8d95b8; }
.poi-brown { fill: #87776b; }
.poi-teal { fill: #19a3ae; }
.poi-white { fill: #fff; }
.poi-mark { fill: #e8ebf5; stroke: #8d95b8; stroke-width: 2; }
.wheel { stroke: #d8f4f4; stroke-width: 2; }
.office { fill: #74787f; }
.pois .green { fill: #4f8a45; font-size: 32px; }
.pois .slate { fill: #6e7494; }
.pois .dark { fill: #555b70; font-size: 32px; }
.pois .brown { fill: #7a6a5f; font-size: 32px; }
.pois .strong { fill: #404040; font-size: 36px; font-weight: 700; }
.pois .town { fill: #8c8585; font-size: 43px; }
.pois .gu { fill: #5b5656; font-size: 40px; }
.pois .blue { fill: #4f7ba8; font-size: 32px; }
.map-canvas .copyright { font: 34px "Liberation Sans", sans-serif; fill: #222; stroke: none; }
.map-canvas .naver { font: 900 37px Inter, sans-serif; fill: #03cf5c; stroke: none; }
.map-canvas .scale-text { font: 700 30px "Liberation Sans", sans-serif; fill: #333; text-anchor: middle; stroke: none; }
.scale-bar { stroke: #222; stroke-width: 2.4; }
.zoom {
  position: absolute; top: .95rem; right: 1rem;
  display: flex; flex-direction: column;
  width: 3.05rem; height: 5.95rem;
  border: .12rem solid #444; background: #fff; color: #333;
}
.zoom span { flex: 1; display: flex; align-items: center; justify-content: center; font-size: 2.3rem; line-height: 1; }
.zoom span + span { border-top: .1rem solid #bbb; }

.chat { display: flex; flex-direction: column; padding: .9rem .9rem 1.25rem .9rem; border: solid #dfe1ea; border-width: 0 .1rem .12rem .15rem; }
.messages { flex: 1; width: 28.45rem; border: .1rem solid #e5e7eb; border-radius: 1.2rem; }
.compose { display: flex; align-items: center; gap: .8rem; margin-top: .5rem; }
.message-input { width: 24.05rem; height: 3.35rem; padding-left: .5rem; border: .1rem solid #e0e4e8; border-radius: .8rem; line-height: 3rem; font-size: 1.29rem; color: #9ca3af; white-space: nowrap; }
.send { display: flex; align-items: center; justify-content: center; width: 3.2rem; height: 3.2rem; border-radius: .4rem; background: #06b6d4; color: #fff; }
.send svg { width: 1rem; height: 1rem; stroke-width: .9; }

/* dialog */
.overlay { position: absolute; inset: 0; display: flex; align-items: center; justify-content: center; background: rgba(0, 0, 0, .5); }
.modal {
  display: flex; flex-direction: column;
  width: 76.8rem; height: 76.3rem; padding: 2.4rem;
  border-radius: .8rem; background: #fff; color: #000;
}
.modal h3 { font-size: 1.51rem; line-height: 2rem; color: #111; }
.tabs { display: flex; align-items: center; gap: .8rem; height: 3.4rem; margin-top: .8rem; }
.tab { height: 3.4rem; width: 12.5rem; padding-bottom: .18rem; border: .1rem solid #06b6d4; border-radius: 1.7rem; background: #fff; color: #06b6d4; font-size: 1.3rem; box-shadow: 0 .1rem .2rem rgba(0, 0, 0, .06); }
.tab-on { height: 3.2rem; width: 8.3rem; border: 0; background: #06b6d4; color: #fff; font-size: 1.31rem; font-weight: 500; }
.search { height: 3.8rem; margin-top: .8rem; padding-left: .8rem; border: .1rem solid #d1d5db; border-radius: .4rem; font-size: 1.5rem; line-height: 3.6rem; color: #9ca3af; }
.chips { display: flex; gap: .8rem; margin-top: .8rem; }
.chip { width: 5rem; height: 2.6rem; border: .1rem solid #06b6d4; border-radius: 1.3rem; background: #fff; color: #06b6d4; font-size: 1.28rem; line-height: 2.2rem; }
.chip-on { width: 4.8rem; background: #06b6d4; color: #fff; font-weight: 500; }
.list { display: flex; flex-direction: column; gap: .8rem; height: 50.4rem; margin-top: 1.6rem; overflow: hidden; }
.card { flex: none; height: 8.2rem; padding: .97rem 1.65rem 0; border: .1rem solid #e5e7eb; border-radius: .8rem; }
.card h4 { margin-bottom: .2rem; font-size: 1.5rem; line-height: 2.4rem; color: #000; }
.card p { font-size: 1.295rem; line-height: 1.6rem; color: #4b5563; }
.card .kind { color: #6b7280; }
.close { align-self: flex-end; width: 6rem; height: 3.6rem; margin-top: 1.7rem; padding-bottom: .15rem; border-radius: .4rem; background: #06b6d4; color: #fff; font-size: 1.48rem; }

/* numbered callouts over the page */
.callouts { position: absolute; inset: 0; width: 100%; height: 100%; fill: #0f6ba6; stroke: none; }
.callouts path { fill: none; stroke: #0f6ba6; stroke-width: 6; }
.callouts text { fill: #fff; font: 600 82px "Noto Sans", sans-serif; text-anchor: middle; }
```
